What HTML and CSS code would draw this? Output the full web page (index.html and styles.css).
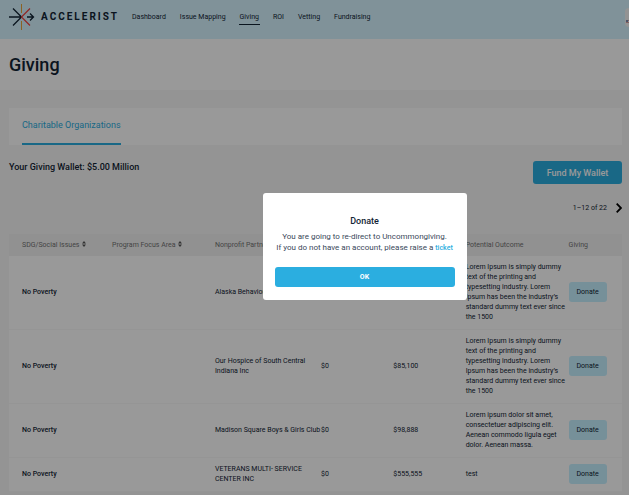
FILE: index.html
```html
<!DOCTYPE html>
<html lang="en">
<head>
  <meta charset="UTF-8">
  <meta name="viewport" content="width=device-width, initial-scale=1.0">
  <title>Accelerist - Giving</title>
  <link rel="stylesheet" href="styles.css">
</head>
<body>
  <header class="topbar">
    <a class="brand" href="#">
      <svg class="brand-mark" viewBox="0 0 26 26" fill="none" stroke-width="1">
        <path stroke="#e8a33a" d="M12.5 0v9M12.5 17v9"/>
        <path stroke="#122434" stroke-width="1.300" d="M0 13h12.500M4 4.500l8.500 8.500L4 21.500M18 13h6.500M21 9.500l3.500 3.500-3.500 3.500"/>
        <path stroke="#f0433f" stroke-width="1.200" d="M21 4.500L12.500 13l8.500 8.500"/>
      </svg>
      <span class="brand-name">ACCELERIST</span>
    </a>
    <nav class="menu">
      <a href="#">Dashboard</a>
      <a href="#">Issue Mapping</a>
      <a href="#" class="active">Giving</a>
      <a href="#">ROI</a>
      <a href="#">Vetting</a>
      <a href="#">Fundraising</a>
    </nav>
    <button class="language" type="button" aria-label="Language">
      <svg width="3" height="4" viewBox="0 0 3 4">
        <path fill="#d8a0a4" d="M0 0h3v1H0zM0 2h3v1H0z"/>
        <path fill="#7f8cae" d="M0 0h2v2H0z"/>
      </svg>
    </button>
  </header>

  <div class="page-title">
    <h1>Giving</h1>
  </div>

  <main class="content">
    <div class="tabs">
      <a href="#" class="tab">Charitable Organizations</a>
    </div>

    <div class="wallet">
      <h2>Your Giving Wallet: $5.00 Million</h2>
      <button class="fund" type="button">Fund My Wallet</button>
    </div>

    <div class="pager">
      <span>1–12 of 22</span>
      <button type="button" aria-label="Next page">
        <svg width="6" height="10" viewBox="0 0 6 10" fill="none" stroke="#000" stroke-width="1.800">
          <path d="M.7.700L5 5 .7 9.300"/>
        </svg>
      </button>
    </div>

    <table class="grants">
      <colgroup>
        <col class="col-issue">
        <col class="col-area">
        <col class="col-partner">
        <col class="col-amount">
        <col class="col-amount">
        <col class="col-outcome">
        <col>
      </colgroup>
      <thead>
        <tr>
          <th>SDG/Social Issues
            <svg class="sort" viewBox="0 0 4 6"><path d="M2 0l2 2.500H0zM2 6L0 3.500h4z"/></svg>
          </th>
          <th>Program Focus Area
            <svg class="sort" viewBox="0 0 4 6"><path d="M2 0l2 2.500H0zM2 6L0 3.500h4z"/></svg>
          </th>
          <th>Nonprofit Partner</th>
          <th></th>
          <th></th>
          <th>Potential Outcome</th>
          <th>Giving</th>
        </tr>
      </thead>
      <tbody>
        <tr>
          <td class="issue">No Poverty</td>
          <td></td>
          <td>Alaska Behavioral</td>
          <td></td>
          <td></td>
          <td>Lorem Ipsum is simply dummy text of the printing and typesetting industry. Lorem Ipsum has been the industry’s standard dummy text ever since the 1500</td>
          <td><button class="donate" type="button">Donate</button></td>
        </tr>
        <tr>
          <td class="issue">No Poverty</td>
          <td></td>
          <td>Our Hospice of South Central Indiana Inc</td>
          <td>$0</td>
          <td>$85,100</td>
          <td>Lorem Ipsum is simply dummy text of the printing and typesetting industry. Lorem Ipsum has been the industry’s standard dummy text ever since the 1500</td>
          <td><button class="donate" type="button">Donate</button></td>
        </tr>
        <tr>
          <td class="issue">No Poverty</td>
          <td></td>
          <td class="one-line">Madison Square Boys &amp; Girls Club</td>
          <td>$0</td>
          <td>$98,888</td>
          <td>Lorem ipsum dolor sit amet, consectetuer adipiscing elit. Aenean commodo ligula eget dolor. Aenean massa.</td>
          <td><button class="donate" type="button">Donate</button></td>
        </tr>
        <tr>
          <td class="issue">No Poverty</td>
          <td></td>
          <td>VETERANS MULTI- SERVICE CENTER INC</td>
          <td>$0</td>
          <td>$555,555</td>
          <td>test</td>
          <td><button class="donate" type="button">Donate</button></td>
        </tr>
      </tbody>
    </table>
  </main>

  <div class="overlay">
    <div class="modal" role="dialog" aria-modal="true" aria-labelledby="modal-title">
      <h3 id="modal-title">Donate</h3>
      <p>You are going to re-direct to Uncommongiving.<br>
        If you do not have an account, please raise a <a href="#">ticket</a></p>
      <button class="ok" type="button">OK</button>
    </div>
  </div>
</body>
</html>
```
FILE: styles.css
```css
* {
  box-sizing: border-box;
}
body {
  margin: 0;
  font-family: Roboto, sans-serif;
  font-size: 7px;
  line-height: 10px;
  color: #122434;
  background: #f7f7f7;
  overflow: hidden;
}
h1, h2, h3, p {
  margin: 0;
  font-weight: 500;
}
a {
  color: inherit;
  text-decoration: none;
}
button {
  font: inherit;
  color: inherit;
  border: none;
  padding: 0;
  cursor: pointer;
}

/* header */
.topbar {
  display: flex;
  align-items: center;
  height: 39px;
  padding-left: 9px;
  background: #d5f3ff;
}
.brand {
  display: flex;
  align-items: center;
  gap: 6px;
  margin-top: -5px;
}
.brand-mark {
  width: 26px;
  height: 26px;
}
.brand-name {
  width: 76px;
  font-size: 10px;
  font-weight: 700;
  letter-spacing: 2px;
}
.menu {
  display: flex;
  gap: 12px;
  margin-top: -5px;
  margin-left: 14px;
}
.menu a {
  padding: 2px 1px;
  border-bottom: 1px solid transparent;
}
.menu .active {
  border-color: #122434;
}
.language {
  display: flex;
  align-items: flex-end;
  justify-content: flex-end;
  width: 4px;
  height: 19px;
  margin-left: auto;
  margin-top: -4px;
  padding-bottom: 3px;
  border-radius: 4px 0 0 4px;
  background: #f5f5f5;
}

/* page title */
.page-title {
  padding: 14px 9px 13px;
  background: #fff;
}
h1 {
  font-size: 18px;
  line-height: 24px;
}

.content {
  padding: 18px 7px 1px 9px;
}

.tabs {
  display: flex;
  height: 37px;
  padding: 0 13px;
  background: #fff;
}
.tab {
  padding-top: 12px;
  font-size: 9px;
  border-bottom: 2px solid #2baee0;
  color: #2baee0;
}

.wallet {
  display: flex;
  justify-content: space-between;
  padding-top: 16px;
}
h2 {
  font-size: 9px;
  line-height: 12px;
}
.fund {
  width: 89px;
  height: 23px;
  border-radius: 3px;
  font-size: 9px;
  font-weight: 500;
  color: #fff;
  background: #2baee0;
}

.pager {
  display: flex;
  align-items: center;
  justify-content: flex-end;
  gap: 9px;
  padding: 19px 0 21px;
}
.pager button {
  display: flex;
  background: none;
}

/* table */
.grants {
  width: 100%;
  table-layout: fixed;
  border-collapse: collapse;
  background: #fff;
}
.col-issue, .col-area, .col-outcome {
  width: 16.800%;
}
.col-partner {
  width: 17.300%;
}
.col-amount {
  width: 11.800%;
}
th {
  padding: 6px 0;
  font-weight: 400;
  text-align: left;
  white-space: nowrap;
  color: #737373;
  background: #f2f2f2;
}
td {
  padding: 6px 0 7px;
  border-bottom: 1px solid #f9f9f9;
}
th:first-child, td:first-child {
  padding-left: 13px;
}
.issue {
  font-weight: 500;
}
.one-line {
  white-space: nowrap;
}
.sort {
  width: 4px;
  height: 6px;
  margin-left: 1px;
  fill: #555;
}
.donate {
  width: 38px;
  height: 20px;
  border-radius: 3px;
  background: #c5f0ff;
}

/* dialog */
.overlay {
  position: fixed;
  inset: 0;
  display: flex;
  align-items: center;
  justify-content: center;
  padding: 0 0 3px 100px;
  background: rgba(0, 0, 0, 0.4);
}
.modal {
  width: 204px;
  padding: 22px 12px 13px;
  border-radius: 3px;
  text-align: center;
  background: #fff;
}
.modal h3 {
  font-size: 9px;
  line-height: 12px;
}
.modal p {
  margin: 4px -4px 13px;
  font-size: 8px;
  line-height: 11px;
  font-weight: 400;
  color: #39485a;
}
.modal a {
  font-size: 7px;
  font-weight: 500;
  color: #2baee0;
}
.ok {
  width: 100%;
  height: 20px;
  border-radius: 3px;
  font-weight: 700;
  color: #fff;
  background: #2baee0;
}
```
